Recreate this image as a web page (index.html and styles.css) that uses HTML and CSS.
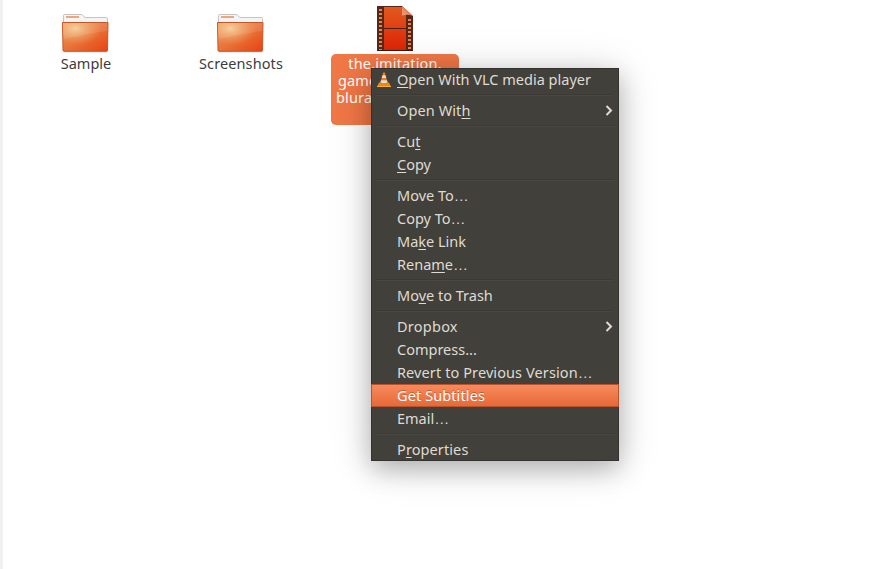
FILE: index.html
```html
<!DOCTYPE html>
<html lang="en">
<head>
<meta charset="utf-8">
<title>Files</title>
<link rel="stylesheet" href="styles.css">
</head>
<body>
<svg class="defs" width="0" height="0" aria-hidden="true">
  <defs>
    <linearGradient id="front" x1="0" y1="0" x2="1" y2="1"><stop offset="0" stop-color="#ec9858"/><stop offset=".5" stop-color="#e8733a"/><stop offset="1" stop-color="#e8420f"/></linearGradient>
    <radialGradient id="glow" cx=".28" cy=".2" r=".6"><stop offset="0" stop-color="#f6d399" stop-opacity=".9"/><stop offset="1" stop-color="#f0a060" stop-opacity="0"/></radialGradient>
    <linearGradient id="film" x1="0" y1="0" x2="0" y2="1"><stop offset="0" stop-color="#e2591f"/><stop offset="1" stop-color="#dc2306"/></linearGradient>
    <linearGradient id="fold" x1="0" y1="1" x2="1" y2="0"><stop offset="0" stop-color="#f5a583"/><stop offset="1" stop-color="#dc5a2b"/></linearGradient>
    <symbol id="folder" viewBox="0 0 48 40">
      <path d="M2 38.500h44v1H2z" fill="#000" opacity=".12"/>
      <path d="M1.500 15V2.500q0-1 1-1H19q1 0 1.500.6L23 4.500h21.500q1 0 1 1V15z" fill="#f4f4f4" stroke="#c4c4c4"/>
      <path d="M4 3h13v2H4z" fill="#f0a47b"/>
      <path d="M.5 9.500h45.500l-.5 28q0 .8-1 .8H2q-1 0-1-.8z" fill="url(#front)" stroke="#c4572a"/>
      <path d="M1 10h44.500l-.5 27.800H1.500z" fill="url(#glow)"/>
      <path d="M1 10h44.500l-.2 8C33 19 18 23 1.300 26z" fill="#fff" opacity=".1"/>
    </symbol>
  </defs>
</svg>
<main class="files">
  <div class="file"><svg class="folder" width="48" height="40"><use href="#folder"/></svg><span class="name">Sample</span></div>
  <div class="file"><svg class="folder" width="48" height="40"><use href="#folder"/></svg><span class="name wide">Screenshots</span></div>
  <div class="file selected">
    <svg class="video" width="36" height="46" viewBox="0 0 36 46">
      <path d="M0 0h25l11 10v35H0z" fill="#54281a"/>
      <path d="M7 1h18l4 8v36H7z" fill="url(#film)"/>
      <path d="M6 22.500h24" stroke="#49200f"/>
      <path d="M3.500 3v41M32.500 13v31" stroke="#e98153" stroke-width="3" stroke-dasharray="2 2"/>
      <path d="M25 0l11 10q-5-2-11-.5z" fill="url(#fold)"/>
      <path d="M0 44.500h36" stroke="#3c190e"/>
    </svg>
    <div class="name"><div>the.imitation.</div><div class="second">game</div><div class="third">blura</div></div>
  </div>
</main>
<nav class="menu">
  <div class="item"><svg class="vlc" width="16" height="16" viewBox="0 0 16 16"><path d="M3 10.500h10l2 4.500H1z" fill="#f48a0b"/><path d="M1 14.500h14" stroke="#ffb02a"/><path d="M7.200.5h1.600L12 12q-4 2-8 0z" fill="#f07c12"/><path d="M6.500 3.300h3l.8 2.700H5.700zM5 8.300h6l.6 2.200q-3.600 1.500-7.200 0z" fill="#dddcd8"/></svg><span><u>O</u>pen With VLC media player</span></div>
  <hr>
  <div class="item"><span class="slight">Open Wit<u>h</u></span><svg class="arrow" width="8" height="12" viewBox="0 0 8 12"><path d="M1.500 1L6 5.500 1.500 10"/></svg></div>
  <hr>
  <div class="item"><span>Cu<u>t</u></span></div>
  <div class="item"><span><u>C</u>opy</span></div>
  <hr>
  <div class="item"><span>Move To<span class="dots">…</span></span></div>
  <div class="item"><span>Copy To<span class="dots">…</span></span></div>
  <div class="item"><span>Ma<u>k</u>e Link</span></div>
  <div class="item"><span>Rena<u>m</u>e<span class="dots">…</span></span></div>
  <hr>
  <div class="item"><span>Mo<u>v</u>e to Trash</span></div>
  <hr>
  <div class="item"><span class="loose">Dropbox</span><svg class="arrow" width="8" height="12" viewBox="0 0 8 12"><path d="M1.500 1L6 5.500 1.500 10"/></svg></div>
  <div class="item"><span>Compress...</span></div>
  <div class="item"><span class="slight">Revert to Previous Version<span class="dots">…</span></span></div>
  <div class="item active"><span class="slight">Get Subtitles</span></div>
  <div class="item"><span>Email<span class="dots">…</span></span></div>
  <hr>
  <div class="item"><span class="slight">P<u>r</u>operties</span></div>
</nav>
</body>
</html>
```
FILE: styles.css
```css
* { box-sizing: border-box; }
body {
  margin: 0;
  height: 569px;
  overflow: hidden;
  background: #fff;
  border-left: 3px solid #f2f1f0;
  font: 14.5px/17px "Noto Sans", "Open Sans", sans-serif;
  color: #3c3c3c;
}
.defs { position: absolute; }
.files { display: flex; gap: 27px; padding: 6px 0 0 19px; }
.file { width: 128px; display: flex; flex-direction: column; align-items: center; }
.folder { margin-top: 7px; }
.name { margin-top: 2px; white-space: nowrap; text-align: center; }
.wide { letter-spacing: .1px; }
.selected { margin-left: -1px; }
.selected .name {
  width: 128px;
  height: 71px;
  margin-top: 2px;
  padding-top: 1px;
  border-radius: 5px;
  background: #f07746;
  color: #fff;
  letter-spacing: .15px;
}
.second { padding-left: 7px; text-align: left; }
.third { padding-left: 5px; text-align: left; }
.menu {
  position: absolute;
  left: 371px;
  top: 68px;
  width: 248px;
  height: 393px;
  background: #42403b;
  color: #dfdbd2;
  box-shadow: inset 0 0 0 1px #33322e, 0 8px 24px rgba(0, 0, 0, .26), 0 4px 44px rgba(0, 0, 0, .12);
}
.item { display: flex; align-items: center; height: 23px; padding: 0 6px 0 26px; white-space: nowrap; }
.vlc { margin: 0 5px 0 -21px; }
.item u { text-decoration: underline 1px; text-underline-offset: 2px; text-decoration-skip-ink: none; }
.loose { letter-spacing: .25px; }
.slight { letter-spacing: .1px; }
.dots { font-family: "Liberation Sans", sans-serif; font-size: 15px; line-height: 1px; }
.arrow { margin-left: auto; fill: none; stroke: #dfdbd2; stroke-width: 2; }
.menu hr { height: 2px; margin: 3px 5px; border: 0; background: linear-gradient(#3b3a35 50%, #494742 50%); }
.active {
  background: linear-gradient(#f98b5e, #e56837);
  box-shadow: inset 0 0 0 1px #b9532b;
  color: #fff;
  text-shadow: 0 -1px rgba(140, 50, 15, .45);
}
```
